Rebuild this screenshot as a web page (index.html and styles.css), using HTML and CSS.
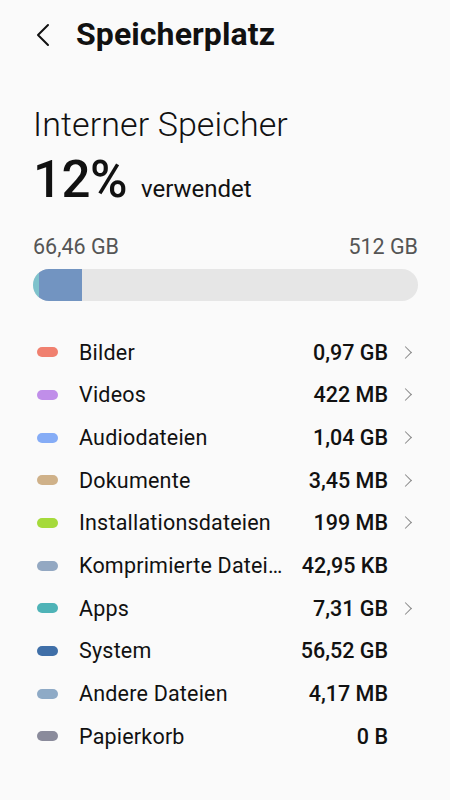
FILE: index.html
```html
<!DOCTYPE html>
<html lang="de">
<head>
<meta charset="utf-8">
<link rel="stylesheet" href="styles.css">
</head>
<body>
<div class="page">
  <header class="topbar">
    <svg class="back" width="16" height="24" viewBox="0 0 16 24"><path d="M13 2 L3 12 L13 22" fill="none" stroke="#111" stroke-width="2" stroke-linecap="round" stroke-linejoin="round"/></svg>
    <h1 class="title">Speicherplatz</h1>
  </header>
  <section class="summary">
    <div class="heading">Interner Speicher</div>
    <div class="usage"><span class="pct">12%</span><span class="used">verwendet</span></div>
    <div class="scale"><span>66,46 GB</span><span>512 GB</span></div>
    <div class="bar"><div class="seg apps"></div><div class="seg sys"></div></div>
  </section>
  <ul class="list">
    <li class="row"><span class="dot" style="background:#f0806f"></span><span class="label">Bilder</span><span class="val">0,97 GB</span><span class="chev"></span></li>
    <li class="row"><span class="dot" style="background:#c08ee9"></span><span class="label">Videos</span><span class="val">422 MB</span><span class="chev"></span></li>
    <li class="row"><span class="dot" style="background:#85acf6"></span><span class="label">Audiodateien</span><span class="val">1,04 GB</span><span class="chev"></span></li>
    <li class="row"><span class="dot" style="background:#cfb189"></span><span class="label">Dokumente</span><span class="val">3,45 MB</span><span class="chev"></span></li>
    <li class="row"><span class="dot" style="background:#a5da3b"></span><span class="label">Installationsdateien</span><span class="val">199 MB</span><span class="chev"></span></li>
    <li class="row"><span class="dot" style="background:#93a8c2"></span><span class="label">Komprimierte Dateien</span><span class="val">42,95 KB</span><span class="nochev"></span></li>
    <li class="row"><span class="dot" style="background:#4eb3b7"></span><span class="label">Apps</span><span class="val">7,31 GB</span><span class="chev"></span></li>
    <li class="row"><span class="dot" style="background:#3f6fa8"></span><span class="label">System</span><span class="val">56,52 GB</span><span class="nochev"></span></li>
    <li class="row"><span class="dot" style="background:#8eaac6"></span><span class="label">Andere Dateien</span><span class="val">4,17 MB</span><span class="nochev"></span></li>
    <li class="row"><span class="dot" style="background:#8a8b9b"></span><span class="label">Papierkorb</span><span class="val">0 B</span><span class="nochev"></span></li>
  </ul>
</div>
</body>
</html>
```
FILE: styles.css
```css
* { box-sizing: border-box; }
html, body { margin: 0; padding: 0; }
body {
  background: #fafafa;
  font-family: Roboto, "Noto Sans", sans-serif;
  color: #111;
  width: 450px;
  height: 800px;
  overflow: hidden;
}
.page { padding: 0 32px 0 33px; }
.topbar {
  display: flex;
  align-items: center;
  height: 68px;
  padding-left: 2px;
}
.back { margin-right: 25px; margin-top: 1px; }
.title {
  margin: 0;
  font-size: 32px;
  font-weight: 700;
  letter-spacing: 0.1px;
}
.summary { padding-top: 36px; }
.heading {
  font-size: 34px;
  font-weight: 300;
  line-height: 40px;
  letter-spacing: 0.1px;
}
.usage {
  display: flex;
  align-items: baseline;
  margin-top: 8px;
  line-height: 56px;
}
.pct { font-size: 51px; font-weight: 500; letter-spacing: -0.5px; }
.used { font-size: 24px; margin-left: 14px; }
.scale {
  display: flex;
  justify-content: space-between;
  color: #555;
  font-size: 21.5px;
  margin-top: 17px;
  line-height: 25px;
}
.bar {
  display: flex;
  height: 32px;
  margin-top: 10px;
  border-radius: 16px;
  background: #e6e6e6;
  overflow: hidden;
}
.seg.apps { width: 6px; background: #7ec2cc; }
.seg.sys { width: 43px; background: #7294c1; }
.list {
  list-style: none;
  margin: 30px 0 0 0;
  padding: 0;
}
.row {
  display: flex;
  align-items: center;
  height: 42.67px;
  font-size: 21.5px;
}
.dot {
  width: 21px;
  height: 10px;
  border-radius: 5px;
  margin-left: 4px;
  flex: none;
}
.label {
  margin-left: 21px;
  flex: 1;
  min-width: 0;
  white-space: nowrap;
  overflow: hidden;
  text-overflow: ellipsis;
  padding-right: 14px;
  letter-spacing: 0.2px;
}
.val { font-weight: 500; white-space: nowrap; flex: none; }
.chev, .nochev { width: 30px; flex: none; display: flex; justify-content: flex-end; }
.chev::after {
  content: "";
  width: 8px;
  height: 8px;
  border-top: 1.3px solid #888;
  border-right: 1.3px solid #888;
  transform: rotate(45deg);
  margin-right: 8px;
}
```
